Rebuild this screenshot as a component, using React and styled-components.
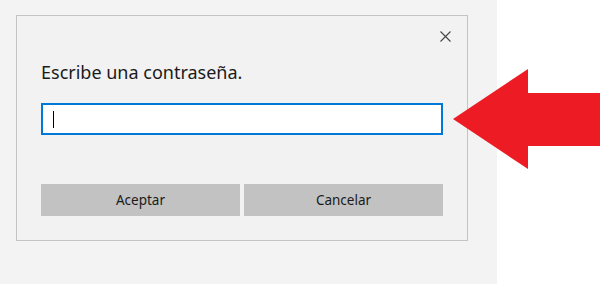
import React from "react";
import styled, { createGlobalStyle } from "styled-components";

const Global = createGlobalStyle`
  html, body { margin: 0; padding: 0; background: #ffffff; }
  body { font-family: "Noto Sans", "Open Sans", sans-serif; }
`;

const Page = styled.div`
  position: relative;
  width: 614px;
  height: 284px;
  display: grid;
  grid-template-columns: 497px 1fr;
  overflow: hidden;
`;

const Backdrop = styled.div`
  background: #f3f3f3;
  padding: 15px 0 0 16px;
`;

const Dialog = styled.div`
  box-sizing: border-box;
  width: 452px;
  height: 226px;
  background: #f2f2f2;
  border: 1px solid #c4c4c4;
  display: flex;
  flex-direction: column;
  padding: 0 24px;
`;

const TopBar = styled.div`
  display: flex;
  justify-content: flex-end;
  height: 36px;
  padding-top: 15px;
  box-sizing: border-box;
  margin-right: -8px;
`;

const Close = styled.button`
  border: 0;
  background: none;
  padding: 0;
  width: 11px;
  height: 11px;
  display: flex;
  cursor: pointer;
`;

const Title = styled.div`
  font-size: 18px;
  color: #1b1b1b;
  line-height: 24px;
  margin-top: 8px;
  padding-left: 0;
`;

const Field = styled.div`
  box-sizing: border-box;
  margin-top: 19px;
  width: 402px;
  height: 32px;
  background: #ffffff;
  border: 2px solid #0078d7;
  display: flex;
  align-items: center;
  padding-left: 10px;
`;

const Caret = styled.span`
  width: 1px;
  height: 17px;
  background: #000;
`;

const Buttons = styled.div`
  display: grid;
  grid-template-columns: 199px 199px;
  gap: 4px;
  margin-top: 49px;
`;

const Button = styled.button`
  height: 32px;
  border: 0;
  background: #c2c2c2;
  color: #1a1a1a;
  font-family: "Noto Sans", "Open Sans", sans-serif;
  font-size: 13.5px;
  padding: 0;
`;

const Arrow = styled.svg`
  position: absolute;
  left: 450px;
  top: 66px;
`;

export default function App() {
  return (
    <>
      <Global />
      <Page>
        <Backdrop>
          <Dialog>
            <TopBar>
              <Close aria-label="Cerrar">
                <svg width="11" height="11" viewBox="0 0 11 11">
                  <path d="M0.5 0.5 L10.5 10.5 M10.5 0.5 L0.5 10.5" stroke="#444" strokeWidth="1.1" />
                </svg>
              </Close>
            </TopBar>
            <Title>Escribe una contraseña.</Title>
            <Field>
              <Caret />
            </Field>
            <Buttons>
              <Button>Aceptar</Button>
              <Button>Cancelar</Button>
            </Buttons>
          </Dialog>
        </Backdrop>
        <div />
        <Arrow width="154" height="108" viewBox="450 66 154 108">
          <polygon
            points="453,119 528,69 528,93 600,93 600,146 528,146 528,169"
            fill="#ed1c24"
          />
        </Arrow>
      </Page>
    </>
  );
}
